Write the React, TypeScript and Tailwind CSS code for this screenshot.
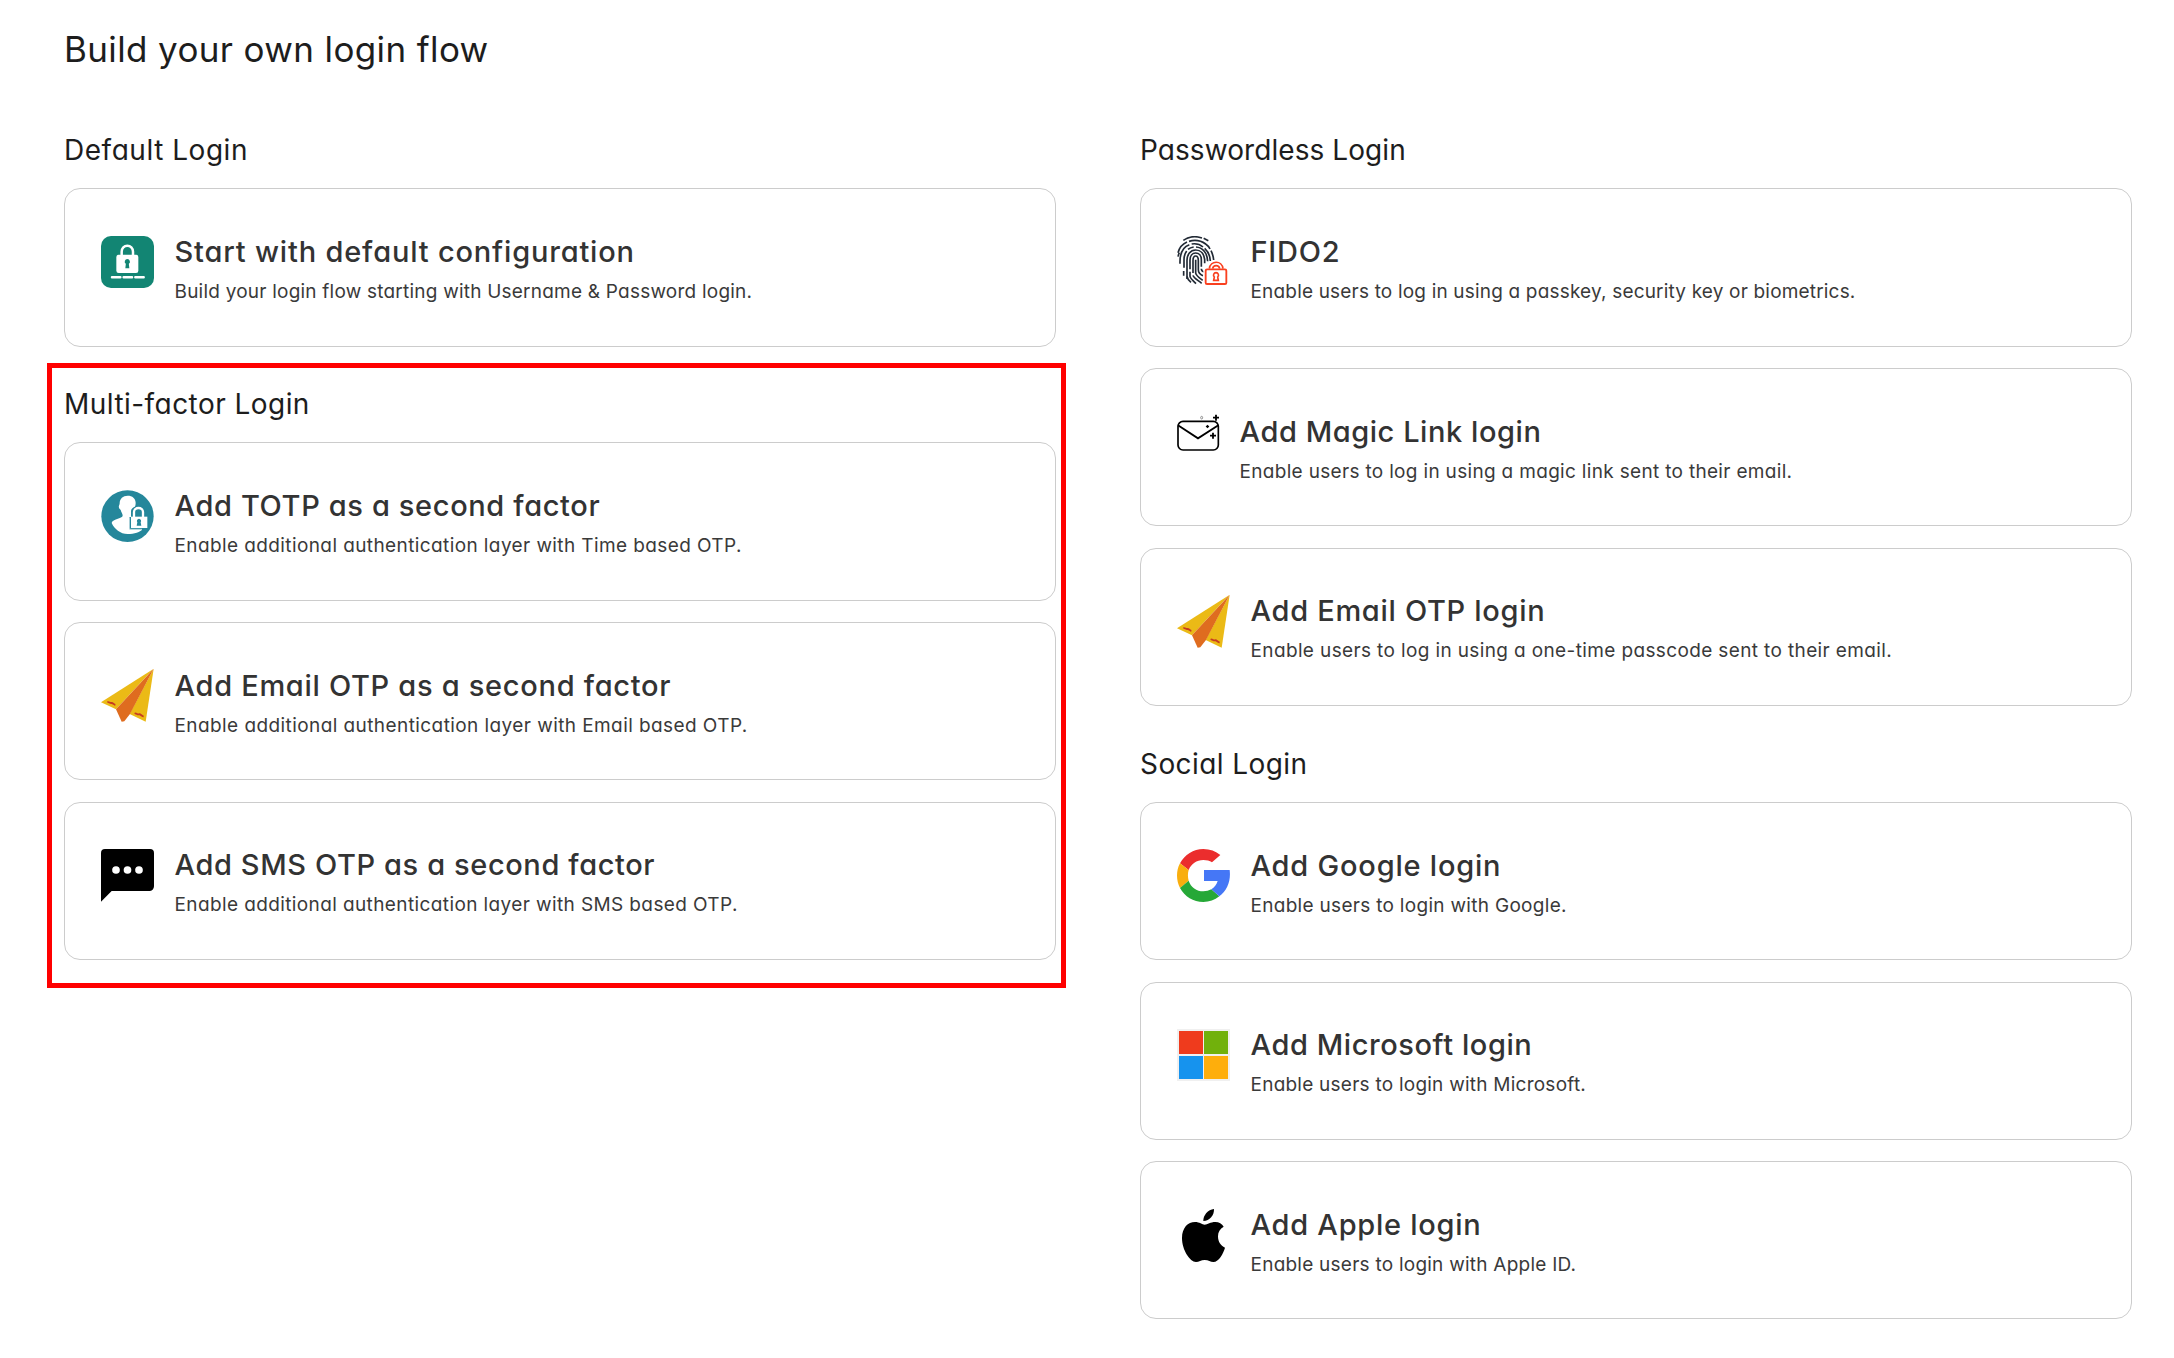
import type { ReactNode } from "react";

function DefaultIcon() {
  return (
    <svg viewBox="33 33 159 156" className="h-[52px] w-[53px]">
      <rect x="33" y="33" width="159" height="156" rx="30" fill="#128573" />
      <path d="M95 92V80a17 18 0 0 1 34 0v12" fill="none" stroke="#fff" strokeWidth="7.5" />
      <rect x="79" y="89" width="66" height="55" rx="7" fill="#fff" />
      <path d="M112 102a8 8 0 0 0-4.500 14.500l-1.500 13.500h12l-1.500-13.500A8 8 0 0 0 112 102z" fill="#128573" />
      <path d="M66 157h25M101 157h25M136 157h25" stroke="#fff" strokeWidth="7.500" strokeLinecap="round" />
    </svg>
  );
}

function TotpIcon() {
  return (
    <svg viewBox="33 35 159 159" className="h-[53px] w-[53px]">
      <ellipse cx="112.500" cy="113.500" rx="78.500" ry="77.500" fill="#25879b" />
      <path d="M113 52c-14 0-24 9-24 23 0 5-4 7-2 13 1 3 3 4 5 7 2 8 6 11 6 17 0 8-33 10-33 22 8 18 26 33 48 33 20 0 37-6 47-16l-20-30-14-20c6-8 11-16 11-27 0-14-10-22-24-22z" fill="#fff" />
      <path d="M118 116h5V99c0-9 9-16 22-16 15 0 21 9 21 18v12h11v42h-59z" fill="#25879b" />
      <path d="M132 117v-16a13.500 12 0 0 1 27 0v16" fill="none" stroke="#fff" strokeWidth="7" />
      <rect x="123" y="115" width="49" height="34" fill="#fff" />
      <path d="M117 117v36h39" fill="none" stroke="#fff" strokeWidth="2.500" />
      <path d="M147 121a7 7 0 0 0-5 11l-2 10h14l-2-10a7 7 0 0 0-5-11z" fill="#25879b" />
    </svg>
  );
}

function PlaneIcon() {
  return (
    <svg viewBox="33 34 159 159" className="h-[53px] w-[53px] overflow-visible">
      <path d="M190 34L33 134l45 21z" fill="#ebba16" />
      <path d="M191 33L167 192l-48-23z" fill="#ebba16" />
      <path d="M191 33L78 155l17 37 8-1 17-22z" fill="#df6c1f" />
      <path d="M52 134c5-3 7 3 12 2s7 5 12 6M134 168c5-3 8 4 13 2s8 6 14 6" fill="none" stroke="#c63b22" strokeWidth="5.500" />
    </svg>
  );
}

function SmsIcon() {
  return (
    <svg viewBox="33 33 159 159" className="h-[53px] w-[53px]">
      <path d="M45 33h135a12 12 0 0 1 12 12v100a14 14 0 0 1-14 14H65l-32 32V45a12 12 0 0 1 12-12z" fill="#000" />
      <g fill="#fff">
        <circle cx="78" cy="96" r="11.500" />
        <circle cx="112.500" cy="96" r="11.500" />
        <circle cx="147" cy="96" r="11.500" />
      </g>
    </svg>
  );
}

function FidoIcon() {
  return (
    <svg viewBox="36 33 159 156" className="h-[52px] w-[53px]">
      <g fill="none" stroke="#222a35" strokeWidth="5">
        <path d="M55 46c10-7 22-11 34-11 8 0 15 2 22 4M116 40l14 7" />
        <path d="M39 83c4-15 13-26 27-32M72 49c17-5 36-2 50 8 6 4 10 9 13 15M138 77c4 8 7 17 8 28" />
        <path d="M39 95c1-4 2-8 4-12M45 116c-1-29 8-50 28-57M80 57c12-2 25 1 34 9M119 70c10 9 16 20 17 38" />
        <path d="M57 128V104c0-10 3-19 8-26M69 73c5-4 11-6 17-7M93 66c19 1 34 17 35 43" />
        <path d="M56 138v14M66 162V106c0-17 10-31 26-31 15 0 25 12 27 28v12" />
        <path d="M75 133v-28c0-12 7-21 17-21s17 8 17 20v21M75 140v14c0 5 6 11 18 22M66 154c1 7 6 13 12 18" />
        <path d="M84 144v-37c0-8 3-14 8-14s8 5 8 14v27c0 10 4 14 14 18M84 151c1 6 8 10 26 24" />
        <path d="M92 104v40c1 8 9 13 21 22M109 131c0 6 3 8 8 10" />
      </g>
      <rect x="115" y="126" width="76" height="58" fill="#fff" />
      <g fill="none" stroke="#f9401f">
        <rect x="122" y="133" width="62" height="44" rx="4" strokeWidth="5.500" />
        <path d="M133 131c3-25 38-26 41 0M143 131c2-12 19-12 21 0" strokeWidth="5" />
        <path d="M153 143a7.500 7.500 0 0 0-5 13l-2 10h14l-2-10a7.500 7.500 0 0 0-5-13z" strokeWidth="5" />
      </g>
    </svg>
  );
}

function MagicIcon() {
  return (
    <svg viewBox="36 46 126 156" className="h-[52px] w-[42px] overflow-visible">
      <rect x="39" y="65" width="121" height="86" rx="15" fill="none" stroke="#000" strokeWidth="5" />
      <path d="M39 77l60 39 61-39" fill="none" stroke="#000" strokeWidth="5.500" />
      <path d="M153 45v18M144 54h18M144 99v18M135 108h18" stroke="#000" strokeWidth="5.500" />
      <path d="M127.500 75l5.500 5.500-5.500 5.500-5.500-5.500z" fill="#000" />
      <ellipse cx="110" cy="54" rx="3" ry="4" fill="none" stroke="#555" strokeWidth="1.800" />
    </svg>
  );
}

function GoogleIcon() {
  return (
    <svg viewBox="36 33 159 159" className="h-[53px] w-[53px]">
      <path d="M45 76C59 50 85 33 115 33c20 0 37 7 51 18l-25 22c-7-5-16-7-26-7-20 0-37 12-44 30z" fill="#eb2d2d" />
      <path d="M45 76c-12 22-12 51 0 74l26-22c-3-10-3-22 0-32z" fill="#f9ae0e" />
      <path d="M45 150c14 26 40 42 70 42 18 0 34-6 48-17l-24-21c-7 4-15 6-24 6-20 0-38-12-44-32z" fill="#26a837" />
      <path d="M117 96h77c4 32-7 61-31 79l-24-21c9-6 16-14 19-25h-41z" fill="#4577f6" />
    </svg>
  );
}

function MicrosoftIcon() {
  return (
    <svg viewBox="36 33 159 156" className="h-[52px] w-[53px]">
      <rect x="36" y="33" width="159" height="156" fill="#f0f0f0" />
      <rect x="42" y="39" width="72" height="69" fill="#ef3b1d" />
      <rect x="117" y="39" width="72" height="69" fill="#71b10c" />
      <rect x="42" y="114" width="72" height="69" fill="#1693ee" />
      <rect x="117" y="114" width="72" height="69" fill="#feae0c" />
    </svg>
  );
}

function AppleIcon() {
  return (
    <svg viewBox="36 30 159 159" className="h-[53px] w-[53px]">
      <path d="M147 30c1 19-13 36-32 36-1-17 14-34 32-36z" />
      <path d="M176 83c-11 6-17 16-17 29 0 16 8 28 21 34-5 16-18 43-35 43-9 0-14-6-26-6-11 0-17 6-26 6-18 0-42-36-42-72 0-31 18-48 39-48 14 0 21 8 29 8 9 0 17-8 32-8 11 0 20 5 25 14z" />
    </svg>
  );
}

type CardProps = {
  icon: ReactNode;
  title: string;
  titleClass: string;
  text: string;
  textClass: string;
};

function Card({ icon, title, titleClass, text, textClass }: CardProps) {
  return (
    <div className="flex h-[158.4px] items-start gap-[20.5px] rounded-2xl border border-[#cccccc] bg-white pt-[44.6px] pl-9">
      <div className="mt-[1.9px] shrink-0">{icon}</div>
      <div className="whitespace-nowrap">
        <h3 className={`text-[29px] leading-9 font-medium text-[#333333] ${titleClass}`}>{title}</h3>
        <p className={`mt-[8.2px] text-[19px] leading-7 text-[#3a3a3a] ${textClass}`}>{text}</p>
      </div>
    </div>
  );
}

function Section({ title, titleClass, children }: { title: string; titleClass: string; children: ReactNode }) {
  return (
    <section>
      <h2 className={`mb-5 text-[28px] leading-9 whitespace-nowrap ${titleClass}`}>{title}</h2>
      <div className="flex flex-col gap-[21.2px]">{children}</div>
    </section>
  );
}

export default function App() {
  return (
    <main className="h-[1358px] overflow-hidden bg-white pt-[25.4px] pl-16 font-[Inter,sans-serif] text-[#1d1d1d] [font-feature-settings:'cv11']">
      <h1 className="mb-[59px] text-[35px] leading-[48px] tracking-[0.37px]">Build your own login flow</h1>
      <div className="grid grid-cols-[992px_992px] gap-x-[84px]">
        <div className="flex flex-col gap-[39.6px]">
          <Section title="Default Login" titleClass="tracking-[0.53px]">
            <Card icon={<DefaultIcon />} title="Start with default configuration" titleClass="tracking-[0.82px]" text="Build your login flow starting with Username & Password login." textClass="tracking-[0.22px]" />
          </Section>
          <div className="relative">
            <Section title="Multi-factor Login" titleClass="tracking-[0.45px]">
              <Card icon={<TotpIcon />} title="Add TOTP as a second factor" titleClass="tracking-[0.63px]" text="Enable additional authentication layer with Time based OTP." textClass="tracking-[0.4px]" />
              <Card icon={<PlaneIcon />} title="Add Email OTP as a second factor" titleClass="tracking-[0.7px]" text="Enable additional authentication layer with Email based OTP." textClass="tracking-[0.42px]" />
              <Card icon={<SmsIcon />} title="Add SMS OTP as a second factor" titleClass="tracking-[0.61px]" text="Enable additional authentication layer with SMS based OTP." textClass="tracking-[0.39px]" />
            </Section>
            <div className="pointer-events-none absolute -top-[23.5px] -right-[10px] -bottom-7 -left-[17px] border-[5px] border-[#ff0000]" />
          </div>
        </div>
        <div className="flex flex-col gap-10">
          <Section title="Passwordless Login" titleClass="tracking-[0.07px]">
            <Card icon={<FidoIcon />} title="FIDO2" titleClass="tracking-[0.75px]" text="Enable users to log in using a passkey, security key or biometrics." textClass="tracking-[0.18px]" />
            <Card icon={<MagicIcon />} title="Add Magic Link login" titleClass="tracking-[0.56px]" text="Enable users to log in using a magic link sent to their email." textClass="tracking-[0.32px]" />
            <Card icon={<PlaneIcon />} title="Add Email OTP login" titleClass="tracking-[0.7px]" text="Enable users to log in using a one-time passcode sent to their email." textClass="tracking-[0.37px]" />
          </Section>
          <Section title="Social Login" titleClass="tracking-[0.42px]">
            <Card icon={<GoogleIcon />} title="Add Google login" titleClass="tracking-[0.79px]" text="Enable users to login with Google." textClass="tracking-[0.3px]" />
            <Card icon={<MicrosoftIcon />} title="Add Microsoft login" titleClass="tracking-[0.58px]" text="Enable users to login with Microsoft." textClass="tracking-[0.24px]" />
            <Card icon={<AppleIcon />} title="Add Apple login" titleClass="tracking-[0.73px]" text="Enable users to login with Apple ID." textClass="tracking-[0.24px]" />
          </Section>
        </div>
      </div>
    </main>
  );
}
